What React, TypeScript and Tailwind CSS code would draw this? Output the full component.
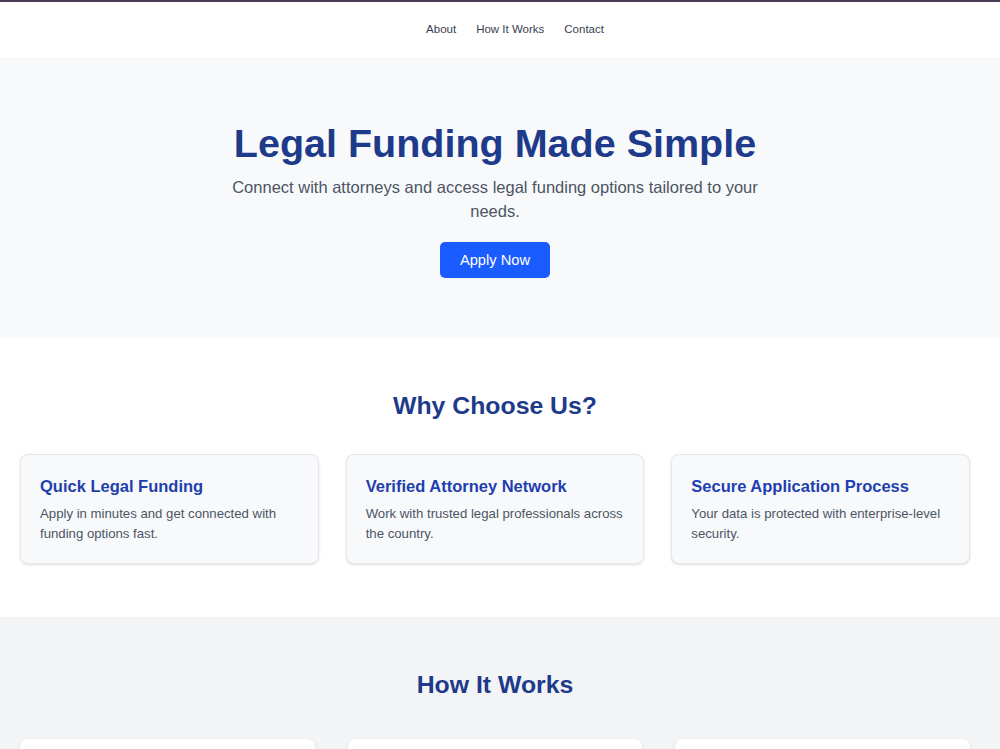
const features = [
  {
    title: "Quick Legal Funding",
    body: "Apply in minutes and get connected with funding options fast.",
  },
  {
    title: "Verified Attorney Network",
    body: "Work with trusted legal professionals across the country.",
  },
  {
    title: "Secure Application Process",
    body: "Your data is protected with enterprise-level security.",
  },
];

function Nav() {
  return (
    <header className="border-t-2 border-[#4a3e56] bg-white">
      <nav className="flex h-[55px] w-[990px] items-center justify-center gap-5 pl-10 text-[11.5px] text-[#374151]">
        <a href="#about">About</a>
        <a href="#how-it-works">How It Works</a>
        <a href="#contact">Contact</a>
      </nav>
    </header>
  );
}

function Hero() {
  return (
    <section className="bg-[#f8f9fb] pt-[62px] pb-[60px]">
      <div className="w-[990px] text-center">
        <h1 className="text-[39.5px] font-bold leading-[48px] text-[#1e3a8a]">
          Legal Funding Made Simple
        </h1>
        <p className="mx-auto mt-2 max-w-[545px] text-[16.5px] leading-6 text-[#4b5563]">
          Connect with attorneys and access legal funding options tailored to your needs.
        </p>
        <button className="mt-[19px] h-9 rounded-[5px] bg-[#1a5cff] px-5 text-[14.7px] text-white">
          Apply Now
        </button>
      </div>
    </section>
  );
}

function WhyChooseUs() {
  return (
    <section id="about" className="bg-white pt-12 pb-[53px]">
      <div className="w-[990px]">
        <h2 className="text-center text-[24.8px] font-bold leading-10 text-[#1e3a8a]">
          Why Choose Us?
        </h2>
        <div className="mt-[28px] ml-5 grid w-[950px] grid-cols-3 gap-[27px]">
          {features.map((f) => (
            <div
              key={f.title}
              className="h-[110px] rounded-lg border border-[#e5e7eb] bg-[#f8f9fb] px-[19px] pt-[19px] shadow-sm"
            >
              <h3 className="text-[16.5px] font-bold leading-6 text-[#1e40af]">{f.title}</h3>
              <p className="mt-[6px] text-[13.2px] leading-5 text-[#4b5563]">{f.body}</p>
            </div>
          ))}
        </div>
      </div>
    </section>
  );
}

function HowItWorks() {
  return (
    <section id="how-it-works" className="bg-[#f3f4f6] pt-12 pb-12">
      <div className="w-[990px]">
        <h2 className="text-center text-[24.8px] font-bold leading-10 text-[#1e3a8a]">
          How It Works
        </h2>
        <div className="mt-[34px] ml-5 grid w-[950px] grid-cols-3 gap-[33px]">
          {[0, 1, 2].map((i) => (
            <div key={i} className="h-[110px] rounded-lg bg-white shadow-sm" />
          ))}
        </div>
      </div>
    </section>
  );
}

export default function App() {
  return (
    <div className="min-h-screen bg-white font-['Liberation_Sans',Arial,sans-serif]">
      <Nav />
      <Hero />
      <WhyChooseUs />
      <HowItWorks />
    </div>
  );
}
